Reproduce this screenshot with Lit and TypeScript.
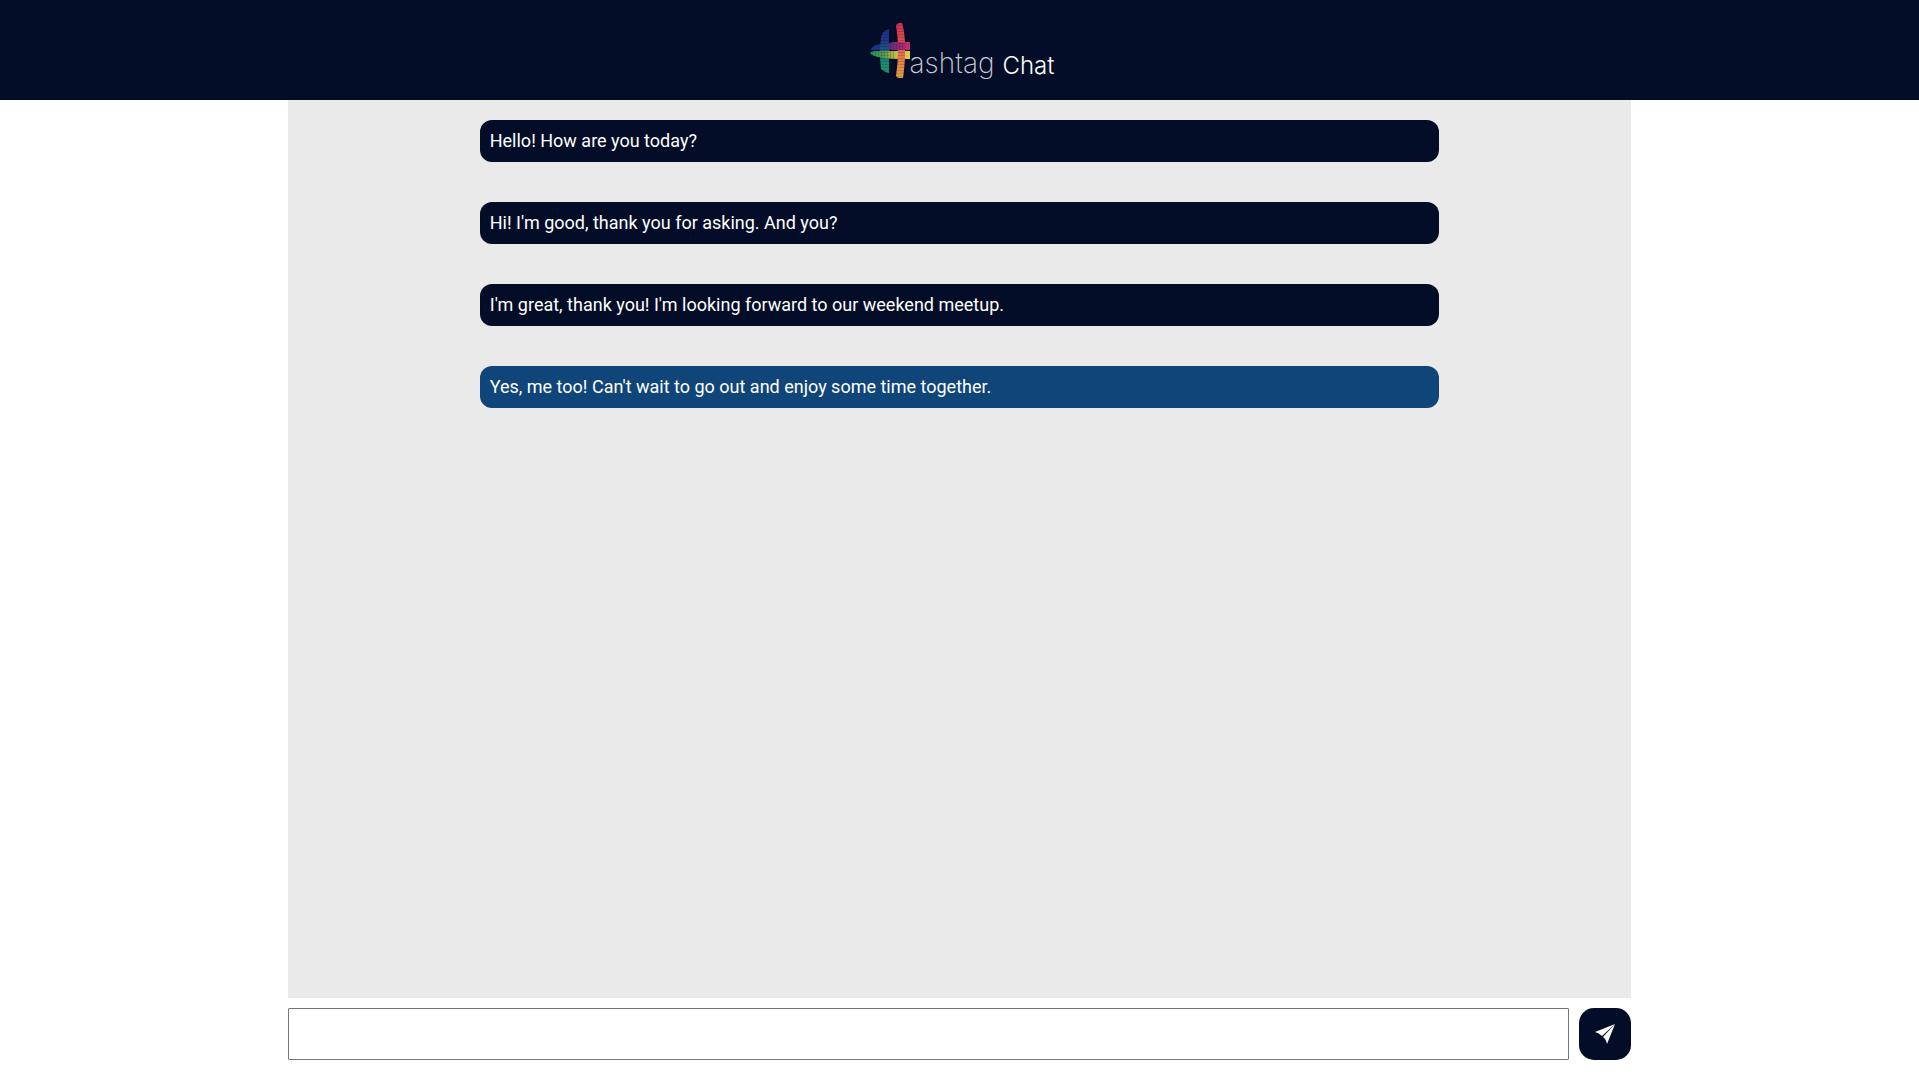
import { LitElement, html, css, svg } from "lit";
import { customElement, state } from "lit/decorators.js";

interface Message {
  text: string;
  own: boolean;
}

@customElement("brand-logo")
export class BrandLogo extends LitElement {
  static styles = css`
    :host {
      display: flex;
      align-items: flex-end;
      color: #fff;
      font-family: Inter, "Liberation Sans", sans-serif;
      white-space: nowrap;
    }
    .mark {
      display: block;
      width: 45px;
      height: 56px;
    }
    .name {
      font-size: 28px;
      line-height: 30px;
      font-weight: 200;
      color: #c9cbd2;
    }
    .product {
      margin-left: 8px;
      font-size: 24px;
      line-height: 24px;
      font-weight: 300;
    }
  `;

  render() {
    const rows = Array.from({ length: 19 }, (_, i) => i * 3);
    const columns = Array.from({ length: 14 }, (_, i) => 4 + i * 3);
    return html`
      <svg class="mark" viewBox="0 0 45 56" aria-hidden="true">
        <defs>
          <linearGradient id="cool" x1="0" y1="0" x2="0" y2="1">
            <stop offset="0" stop-color="#20308c" />
            <stop offset="0.25" stop-color="#1f3585" />
            <stop offset="0.5" stop-color="#1b5c80" />
            <stop offset="0.75" stop-color="#1d8a70" />
            <stop offset="1" stop-color="#1c9468" />
          </linearGradient>
          <linearGradient id="warm" x1="0" y1="0" x2="0" y2="1">
            <stop offset="0" stop-color="#d02f50" />
            <stop offset="0.4" stop-color="#dc5450" />
            <stop offset="0.65" stop-color="#e67a4a" />
            <stop offset="1" stop-color="#e0a045" />
          </linearGradient>
          <linearGradient id="upper" gradientUnits="userSpaceOnUse" x1="5" y1="0" x2="45" y2="0">
            <stop offset="0" stop-color="#1d2f8c" />
            <stop offset="0.3" stop-color="#22307f" />
            <stop offset="0.55" stop-color="#6b2a7c" />
            <stop offset="0.8" stop-color="#a82c78" />
            <stop offset="1" stop-color="#d8306c" />
          </linearGradient>
          <linearGradient id="lower" gradientUnits="userSpaceOnUse" x1="5" y1="0" x2="45" y2="0">
            <stop offset="0" stop-color="#12925a" />
            <stop offset="0.35" stop-color="#5a9c50" />
            <stop offset="0.65" stop-color="#c0bc4a" />
            <stop offset="1" stop-color="#dccb4a" />
          </linearGradient>
          <clipPath id="bars">
            <path d="M24 7Q17 9 16 15Q14 30 16 47Q19 50 24 51Z" />
            <path d="M31 3Q34 0 37 1Q39 6 40 20V36Q39 50 38 56Q33 57 31 54Q35 28 31 3Z" />
          </clipPath>
          <clipPath id="bands">
            <path d="M25 21H44Q45 21 45 22V27Q45 28 43 28H25Z" />
            <path d="M5 31Q6 29 10 29H31V37Q15 36 7 33Z" />
          </clipPath>
        </defs>
        <path fill="url(#upper)" d="M6 27Q8 23 15 22L30 20H44Q45 20 45 22V27Q45 28 43 28H6Z" />
        <path fill="url(#cool)" d="M24 7Q17 9 16 15Q14 30 16 47Q19 50 24 51Z" />
        <path fill="url(#lower)" d="M5 31Q6 29 10 29H45V37H35Q15 37 7 33Z" />
        <path fill="url(#warm)" d="M31 3Q34 0 37 1Q39 6 40 20V36Q39 50 38 56Q33 57 31 54Q35 28 31 3Z" />
        <path fill="url(#upper)" d="M25 21L30 20H44Q45 20 45 22V27Q45 28 43 28H25Z" />
        <g clip-path="url(#bars)">
          ${rows.map((y) => svg`<rect x="14" y=${y} width="28" height="1" fill="#000" opacity="0.15" />`)}
        </g>
        <g clip-path="url(#bands)">
          ${columns.map((x) => svg`<rect x=${x} y="20" width="1" height="18" fill="#000" opacity="0.15" />`)}
        </g>
      </svg>
      <span class="name">ashtag</span>
      <span class="product">Chat</span>
    `;
  }
}

@customElement("app-root")
export class AppRoot extends LitElement {
  static styles = css`
    :host {
      display: flex;
      flex-direction: column;
      min-height: 100vh;
      background: #fff;
      font-family: Roboto, "Liberation Sans", sans-serif;
      font-size: 18px;
      line-height: 22px;
    }
    * {
      box-sizing: border-box;
    }
    .header {
      display: flex;
      align-items: center;
      justify-content: center;
      height: 100px;
      background: #030d28;
    }
    .chat {
      display: flex;
      flex: 1;
      flex-direction: column;
      width: 70%;
      margin: 0 auto;
    }
    .messages {
      display: flex;
      flex: 1;
      flex-direction: column;
      align-items: center;
      gap: 40px;
      margin: 0;
      padding: 20px 0;
      background: #eaeaea;
      list-style: none;
    }
    .message {
      width: 50vw;
      padding: 10px;
      border-radius: 12px;
      background: #030d28;
      color: #fff;
    }
    .own {
      background: #104579;
    }
    .composer {
      display: flex;
      gap: 10px;
      padding: 10px 0 19px;
    }
    .field {
      flex: 1;
      min-width: 0;
      height: 52px;
      padding: 0 10px;
      border: 1px solid #767676;
      border-radius: 1px;
      background: #fff;
      font: inherit;
    }
    .send {
      display: flex;
      align-items: center;
      justify-content: center;
      width: 52px;
      height: 52px;
      padding: 0;
      border: 0;
      border-radius: 15px;
      background: #030d28;
      color: #fff;
      cursor: pointer;
    }
    .plane {
      width: 20px;
      height: 20px;
    }
  `;

  @state() private messages: Message[] = [
    { text: "Hello! How are you today?", own: false },
    { text: "Hi! I'm good, thank you for asking. And you?", own: false },
    { text: "I'm great, thank you! I'm looking forward to our weekend meetup.", own: false },
    { text: "Yes, me too! Can't wait to go out and enjoy some time together.", own: true },
  ];

  private send(event: Event) {
    event.preventDefault();
    const field = this.renderRoot.querySelector<HTMLInputElement>(".field")!;
    const text = field.value.trim();
    if (!text) return;
    this.messages = [...this.messages, { text, own: true }];
    field.value = "";
  }

  render() {
    return html`
      <header class="header"><brand-logo></brand-logo></header>
      <main class="chat">
        <ul class="messages">
          ${this.messages.map((m) => html`<li class="message ${m.own ? "own" : ""}">${m.text}</li>`)}
        </ul>
        <form class="composer" @submit=${this.send}>
          <input class="field" type="text" aria-label="Message" autocomplete="off" />
          <button class="send" type="submit" aria-label="Send">
            <svg class="plane" viewBox="0 0 20 20" fill="currentColor" aria-hidden="true">
              <path d="M0 8L20 0L7 12Q4 9 0 8Z" />
              <path d="M20 0L12 20Q11 15 8 13Z" />
            </svg>
          </button>
        </form>
      </main>
    `;
  }
}
